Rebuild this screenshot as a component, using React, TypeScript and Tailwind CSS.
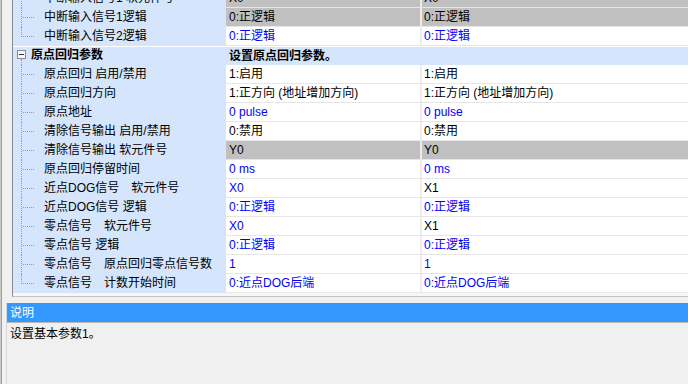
import React from 'react';

type Row = {
  label: string;
  v1?: string;
  v2?: string;
  blue1?: boolean;
  blue2?: boolean;
  gray?: boolean;
  header?: boolean;
  last?: boolean;
};

const rows: Row[] = [
  { label: '中断输入信号1 软元件号', v1: 'X0', v2: 'X0', gray: true },
  { label: '中断输入信号1逻辑', v1: '0:正逻辑', v2: '0:正逻辑', gray: true },
  { label: '中断输入信号2逻辑', v1: '0:正逻辑', v2: '0:正逻辑', blue1: true, blue2: true, last: true },
  { label: '原点回归参数', v1: '设置原点回归参数。', header: true },
  { label: '原点回归 启用/禁用', v1: '1:启用', v2: '1:启用' },
  { label: '原点回归方向', v1: '1:正方向 (地址增加方向)', v2: '1:正方向 (地址增加方向)' },
  { label: '原点地址', v1: '0 pulse', v2: '0 pulse', blue1: true, blue2: true },
  { label: '清除信号输出 启用/禁用', v1: '0:禁用', v2: '0:禁用' },
  { label: '清除信号输出 软元件号', v1: 'Y0', v2: 'Y0', gray: true },
  { label: '原点回归停留时间', v1: '0 ms', v2: '0 ms', blue1: true, blue2: true },
  { label: '近点DOG信号　软元件号', v1: 'X0', v2: 'X1', blue1: true },
  { label: '近点DOG信号 逻辑', v1: '0:正逻辑', v2: '0:正逻辑', blue1: true, blue2: true },
  { label: '零点信号　软元件号', v1: 'X0', v2: 'X1', blue1: true },
  { label: '零点信号 逻辑', v1: '0:正逻辑', v2: '0:正逻辑', blue1: true, blue2: true },
  { label: '零点信号　原点回归零点信号数', v1: '1', v2: '1', blue1: true, blue2: true },
  { label: '零点信号　计数开始时间', v1: '0:近点DOG后端', v2: '0:近点DOG后端', blue1: true, blue2: true, last: true },
];

const TreeCell = ({ row }: { row: Row }) => {
  if (row.header) {
    return (
      <div className="relative w-[213px] h-[19px] shrink-0 bg-[#d5e5fb] border-t border-white">
        <span className="absolute left-[4px] top-[3px] w-[9px] h-[9px] border border-[#8c8c8c] bg-[#f6f6f6] flex items-center justify-center">
          <span className="w-[5px] h-px bg-[#333]" />
        </span>
        <span className="absolute left-[8px] top-[12px] bottom-0 border-l border-dotted border-[#9a9a9a]" />
        <span className="absolute left-[18px] top-[-1px] leading-[18px] font-bold">{row.label}</span>
      </div>
    );
  }
  return (
    <div className="relative w-[213px] h-[19px] shrink-0 bg-[#d5e5fb]">
      <span
        className={
          row.last
            ? 'absolute left-[8px] top-0 h-[10px] border-l border-dotted border-[#9a9a9a]'
            : 'absolute left-[8px] top-0 h-[19px] border-l border-dotted border-[#9a9a9a]'
        }
      />
      <span className="absolute left-[10px] top-[9px] w-[11px] border-t border-dotted border-[#9a9a9a]" />
      <span className="absolute left-[31px] top-0 leading-[18px]">{row.label}</span>
    </div>
  );
};

const App = () => {
  return (
    <div className="w-[688px] h-[384px] overflow-hidden bg-[#f0f0f0] flex text-[12px] text-black font-['Liberation_Sans','Noto_Sans_CJK_SC',sans-serif]">
      <div className="w-[2px] shrink-0 border-l border-[#c8c8c8] bg-[#a0a0a0]" />
      <div className="flex-1 flex flex-col min-w-0">
        {/* Parameter grid */}
        <div className="pl-[10px]">
          <div className="h-[297px] border-l border-[#8a8a8a] border-b border-b-[#c4c4c4] bg-[#f7f7f7] overflow-hidden">
            <div className="mt-[-11px] flex flex-col">
              {rows.map((row, i) => (
                <div key={i} className="flex h-[19px]">
                  <TreeCell row={row} />
                  {row.header ? (
                    <div className="flex-1 bg-[#d5e5fb] border-t border-white px-[3px] leading-[18px] font-bold">
                      {row.v1}
                    </div>
                  ) : (
                    <>
                      <div
                        className={
                          (row.gray ? 'bg-[#c0c0c0] ' : 'bg-white ') +
                          (row.blue1 ? 'text-[#0000ff] ' : 'text-black ') +
                          'w-[194px] shrink-0 border-b border-[#e6e6e6] px-[3px] leading-[18px] whitespace-nowrap'
                        }
                      >
                        {row.v1}
                      </div>
                      <div
                        className={
                          (row.gray ? 'bg-[#c0c0c0] ' : 'bg-white ') +
                          (row.blue2 ? 'text-[#0000ff] ' : 'text-black ') +
                          'flex-1 border-l-2 border-l-[#ececec] border-b border-[#e6e6e6] px-[2px] leading-[18px] whitespace-nowrap'
                        }
                      >
                        {row.v2}
                      </div>
                    </>
                  )}
                </div>
              ))}
            </div>
          </div>
        </div>

        {/* Description panel */}
        <div className="mt-[6px] ml-[4px] flex-1 flex flex-col border-l border-[#d8d8d8]">
          <div className="h-[20px] bg-[#3399ff] text-white leading-[20px] pl-[3px] border-b border-[#b8b8b8]">说明</div>
          <div className="flex-1 pl-[3px] pt-[2px] leading-[18px]">设置基本参数1。</div>
        </div>
      </div>
    </div>
  );
};

export default App;
